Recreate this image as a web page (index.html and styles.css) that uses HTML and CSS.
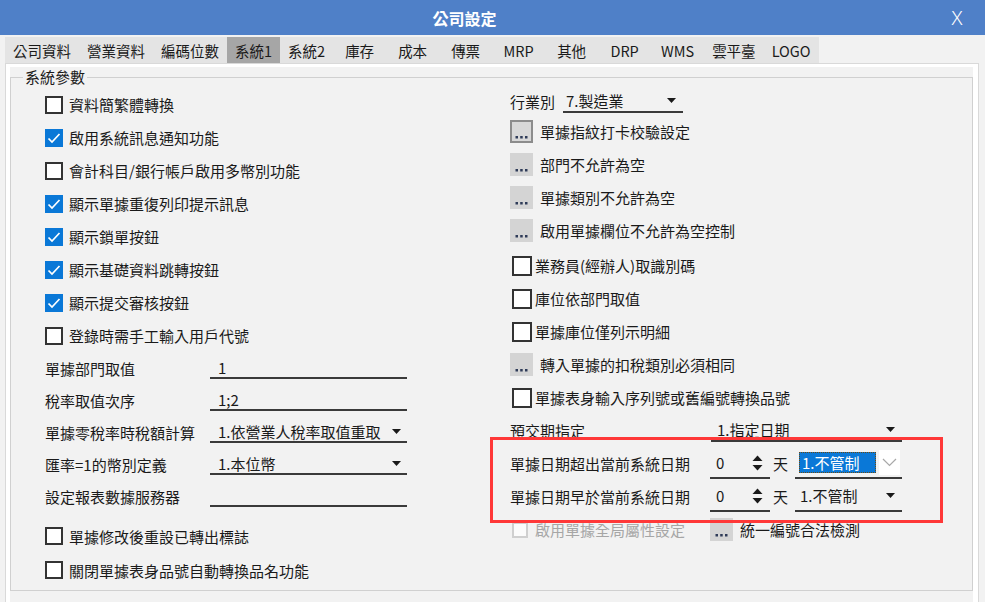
FILE: index.html
```html
<!DOCTYPE html>
<html lang="zh-Hant">
<head>
<meta charset="utf-8">
<title>公司設定</title>
<link rel="stylesheet" href="styles.css">
</head>
<body>
<div class="window">
  <header class="titlebar">
    <div class="title">公司設定</div>
    <div class="close">X</div>
  </header>
  <nav class="tabbar">
    <div class="tabs">
      <span class="tab">公司資料</span>
      <span class="tab">營業資料</span>
      <span class="tab">編碼位數</span>
      <span class="tab active">系統1</span>
      <span class="tab">系統2</span>
      <span class="tab">庫存</span>
      <span class="tab">成本</span>
      <span class="tab">傳票</span>
      <span class="tab">MRP</span>
      <span class="tab">其他</span>
      <span class="tab">DRP</span>
      <span class="tab">WMS</span>
      <span class="tab">雲平臺</span>
      <span class="tab">LOGO</span>
    </div>
  </nav>
  <section class="page">
    <div class="page-inner">
      <fieldset class="group">
        <legend>系統參數</legend>
        <div class="cols">
          <div class="col col-left">
            <div class="row cb-row"><span class="cb"></span><span>資料簡繁體轉換</span></div>
            <div class="row cb-row"><span class="cb on"><svg viewBox="0 0 18 18"><path d="M3.5 9.5 L7 13 L14.5 5"/></svg></span><span>啟用系統訊息通知功能</span></div>
            <div class="row cb-row"><span class="cb"></span><span>會計科目/銀行帳戶啟用多幣別功能</span></div>
            <div class="row cb-row"><span class="cb on"><svg viewBox="0 0 18 18"><path d="M3.5 9.5 L7 13 L14.5 5"/></svg></span><span>顯示單據重復列印提示訊息</span></div>
            <div class="row cb-row"><span class="cb on"><svg viewBox="0 0 18 18"><path d="M3.5 9.5 L7 13 L14.5 5"/></svg></span><span>顯示鎖單按鈕</span></div>
            <div class="row cb-row"><span class="cb on"><svg viewBox="0 0 18 18"><path d="M3.5 9.5 L7 13 L14.5 5"/></svg></span><span>顯示基礎資料跳轉按鈕</span></div>
            <div class="row cb-row"><span class="cb on"><svg viewBox="0 0 18 18"><path d="M3.5 9.5 L7 13 L14.5 5"/></svg></span><span>顯示提交審核按鈕</span></div>
            <div class="row cb-row"><span class="cb"></span><span>登錄時需手工輸入用戶代號</span></div>

            <div class="row field-row"><span class="flabel">單據部門取值</span><span class="field"><span class="val">1</span></span></div>
            <div class="row field-row"><span class="flabel">稅率取值次序</span><span class="field"><span class="val">1;2</span></span></div>
            <div class="row field-row"><span class="flabel">單據零稅率時稅額計算</span><span class="field select"><span class="val">1.依營業人稅率取值重取</span><svg class="arrow" viewBox="0 0 9 5"><polygon points="0,0 9,0 4.5,5"/></svg></span></div>
            <div class="row field-row"><span class="flabel">匯率=1的幣別定義</span><span class="field select"><span class="val">1.本位幣</span><svg class="arrow" viewBox="0 0 9 5"><polygon points="0,0 9,0 4.5,5"/></svg></span></div>
            <div class="row field-row"><span class="flabel">設定報表數據服務器</span><span class="field"><span class="val"></span></span></div>

            <div class="row cb-row tall first-bottom"><span class="cb"></span><span>單據修改後重設已轉出標誌</span></div>
            <div class="row cb-row tall"><span class="cb"></span><span>關閉單據表身品號自動轉換品名功能</span></div>
          </div>

          <div class="col col-right">
            <div class="row first-right"><span>行業別</span><span class="field select industry"><span class="val">7.製造業</span><svg class="arrow" viewBox="0 0 9 5"><polygon points="0,0 9,0 4.5,5"/></svg></span></div>
            <div class="row"><span class="dots focus"><svg viewBox="0 0 23 23"><rect x="5.5" y="16" width="2.5" height="2.5"/><rect x="10.2" y="16" width="2.5" height="2.5"/><rect x="15" y="16" width="2.5" height="2.5"/></svg></span><span>單據指紋打卡校驗設定</span></div>
            <div class="row"><span class="dots"><svg viewBox="0 0 23 23"><rect x="5.5" y="16" width="2.5" height="2.5"/><rect x="10.2" y="16" width="2.5" height="2.5"/><rect x="15" y="16" width="2.5" height="2.5"/></svg></span><span>部門不允許為空</span></div>
            <div class="row"><span class="dots"><svg viewBox="0 0 23 23"><rect x="5.5" y="16" width="2.5" height="2.5"/><rect x="10.2" y="16" width="2.5" height="2.5"/><rect x="15" y="16" width="2.5" height="2.5"/></svg></span><span>單據類別不允許為空</span></div>
            <div class="row"><span class="dots"><svg viewBox="0 0 23 23"><rect x="5.5" y="16" width="2.5" height="2.5"/><rect x="10.2" y="16" width="2.5" height="2.5"/><rect x="15" y="16" width="2.5" height="2.5"/></svg></span><span>啟用單據欄位不允許為空控制</span></div>
            <div class="row shift"><span class="cb big"></span><span>業務員(經辦人)取識別碼</span></div>
            <div class="row"><span class="cb big"></span><span>庫位依部門取值</span></div>
            <div class="row"><span class="cb big"></span><span>單據庫位僅列示明細</span></div>
            <div class="row"><span class="dots"><svg viewBox="0 0 23 23"><rect x="5.5" y="16" width="2.5" height="2.5"/><rect x="10.2" y="16" width="2.5" height="2.5"/><rect x="15" y="16" width="2.5" height="2.5"/></svg></span><span>轉入單據的扣稅類別必須相同</span></div>
            <div class="row"><span class="cb big"></span><span>單據表身輸入序列號或舊編號轉換品號</span></div>
            <div class="row"><span class="rlabel">預交期指定</span><span class="field select delivery"><span class="val">1.指定日期</span><svg class="arrow" viewBox="0 0 9 5"><polygon points="0,0 9,0 4.5,5"/></svg></span></div>
            <div class="row">
              <span class="rlabel">單據日期超出當前系統日期</span>
              <span class="spin"><span class="val">0</span><svg class="spin-arrows" viewBox="0 0 11 20"><polygon points="0.5,8 5.5,2.5 10.5,8"/><polygon points="0.5,12 5.5,17.5 10.5,12"/></svg></span>
              <span class="unit">天</span>
              <span class="dsel open"><span class="hl">1.不管制</span><span class="ddbtn"><svg viewBox="0 0 15 9"><path d="M1 1 L7.5 7.5 L14 1"/></svg></span></span>
            </div>
            <div class="row">
              <span class="rlabel">單據日期早於當前系統日期</span>
              <span class="spin"><span class="val">0</span><svg class="spin-arrows" viewBox="0 0 11 20"><polygon points="0.5,8 5.5,2.5 10.5,8"/><polygon points="0.5,12 5.5,17.5 10.5,12"/></svg></span>
              <span class="unit">天</span>
              <span class="dsel"><span class="val">1.不管制</span><svg class="arrow" viewBox="0 0 9 5"><polygon points="0,0 9,0 4.5,5"/></svg></span>
            </div>
            <div class="row">
              <span class="rlabel disabled"><span class="cb dis"></span><span>啟用單據全局屬性設定</span></span>
              <span class="dots"><svg viewBox="0 0 23 23"><rect x="5.5" y="16" width="2.5" height="2.5"/><rect x="10.2" y="16" width="2.5" height="2.5"/><rect x="15" y="16" width="2.5" height="2.5"/></svg></span><span>統一編號合法檢測</span>
            </div>
          </div>
        </div>
      </fieldset>
    </div>
  </section>
  <div class="highlight"></div>
</div>
</body>
</html>
```

FILE: styles.css
```css
* { box-sizing: border-box; }
html, body { margin: 0; padding: 0; }
body {
  width: 985px;
  height: 602px;
  overflow: hidden;
  background: #f2f2f2;
  font-family: "Noto Sans CJK TC", "Noto Sans", sans-serif;
  font-size: 15px;
  color: #1a1a1a;
}
.window { position: relative; height: 602px; }

/* title bar */
.titlebar {
  height: 35px;
  background: #4f80c8;
  display: flex;
  align-items: center;
  color: #fff;
}
.title {
  flex: 1;
  text-align: center;
  font-size: 16px;
  font-weight: bold;
}
.close {
  width: 56px;
  text-align: center;
  font-family: "Noto Sans", sans-serif;
  font-size: 20px;
  font-weight: 300;
}

/* tabs */
.tabbar {
  height: 28px;
  padding: 2px 0 0 5px;
}
.tabs {
  display: inline-flex;
  height: 26px;
  background: #e4e4e4;
}
.tab {
  min-width: 53px;
  padding: 0 8px;
  display: flex;
  align-items: center;
  justify-content: center;
  font-size: 14.5px;
  color: #1a1a1a;
}
.tab.active { background: #a6a6a6; }

/* page */
.page {
  margin-left: 5px;
  width: 974px;
  height: 539px;
  border: 1px solid #d9d9d9;
  border-bottom: none;
  background: #fff;
  padding: 3px 5px 0 4px;
}
.page-inner {
  height: 100%;
  background: #f2f2f2;
}
.group {
  margin: 0;
  padding: 0;
  min-width: 0;
  border: 1px solid #d0d0d0;
}
.group legend {
  margin-left: 12px;
  padding: 0 2px;
  line-height: 20px;
  font-size: 15px;
}
.cols {
  display: grid;
  grid-template-columns: 465px 1fr;
  padding: 0 0 3px 34px;
}
.col { display: flex; flex-direction: column; }
.col-left { padding-top: 1px; }

.row {
  display: flex;
  align-items: center;
  height: 33px;
  white-space: nowrap;
}
.field-row { height: 32px; }
.cb-row.tall { height: 34px; }
.first-bottom { margin-top: 7px; }

/* checkboxes */
.cb {
  width: 18px;
  height: 18px;
  flex: none;
  border: 2px solid #333;
  background: #fff;
  margin-right: 6px;
  display: block;
}
.cb.on {
  border: none;
  background: #0a78d7;
}
.cb svg { display: block; width: 18px; height: 18px; }
.cb svg path { fill: none; stroke: #fff; stroke-width: 1.7; }
.cb.big {
  width: 20px;
  height: 20px;
  margin-left: 2px;
  margin-right: 3px;
}
.cb.dis {
  width: 16px;
  height: 16px;
  border: 2px solid #cfcfcf;
  background: #fbfbfb;
  margin-left: 2px;
  margin-right: 7px;
}

/* fields */
.flabel { width: 165px; flex: none; }
.field {
  width: 197px;
  height: 22px;
  display: flex;
  align-items: center;
  border-bottom: 2px solid #3a3a3a;
  padding-left: 8px;
  padding-right: 6px;
}
.field .val {
  flex: 1;
  overflow: hidden;
  white-space: nowrap;
}
.arrow {
  width: 9px;
  height: 5px;
  flex: none;
  margin-left: 4px;
}
.arrow polygon { fill: #1a1a1a; }

/* right column */
.first-right { height: 28px; }
.shift { margin-top: 2px; }
.industry {
  margin-left: 8px;
  width: 120px;
  height: 24px;
  padding-left: 3px;
  padding-right: 7px;
}
.rlabel { width: 200px; flex: none; display: flex; align-items: center; }
.rlabel.disabled { color: #a6a6a6; }
.delivery {
  margin-left: 1px;
  width: 191px;
  padding-left: 6px;
  padding-right: 7px;
}

.dots {
  width: 23px;
  height: 23px;
  flex: none;
  background: #d4d4d4;
  margin-right: 7px;
  display: block;
}
.dots.focus {
  background: #d8d8d8;
  box-shadow: inset 0 0 0 2px #8c8c8c;
}
.dots svg { display: block; width: 23px; height: 23px; }
.dots svg rect { fill: #2e3b58; }

.spin {
  width: 60px;
  height: 30px;
  flex: none;
  display: flex;
  align-items: center;
  border-bottom: 2px solid #3a3a3a;
  padding-left: 6px;
  padding-right: 7px;
}
.spin .val { flex: 1; }
.spin-arrows { width: 11px; height: 20px; flex: none; }
.spin-arrows polygon { fill: #1a1a1a; }
.unit { margin-left: 3px; width: 15px; flex: none; }
.dsel {
  margin-left: 7px;
  width: 107px;
  height: 30px;
  flex: none;
  display: flex;
  align-items: center;
  border-bottom: 2px solid #3a3a3a;
  padding-left: 5px;
  padding-right: 7px;
}
.dsel .val { flex: 1; }
.dsel.open { padding-left: 4px; padding-right: 2px; }
.hl {
  width: 77px;
  height: 21px;
  line-height: 19px;
  background: #0a78d7;
  color: #fff;
  border: 1px dotted #6b4a10;
  padding-left: 2px;
}
.ddbtn {
  margin-left: 3px;
  width: 21px;
  height: 25px;
  background: #fff;
  display: flex;
  align-items: center;
  justify-content: center;
}
.ddbtn svg { width: 15px; height: 9px; }
.ddbtn svg path { fill: none; stroke: #a8a8a8; stroke-width: 1.2; }

/* annotation */
.highlight {
  position: absolute;
  left: 490px;
  top: 437px;
  width: 453px;
  height: 86px;
  border: 3px solid #ff3838;
}
```
